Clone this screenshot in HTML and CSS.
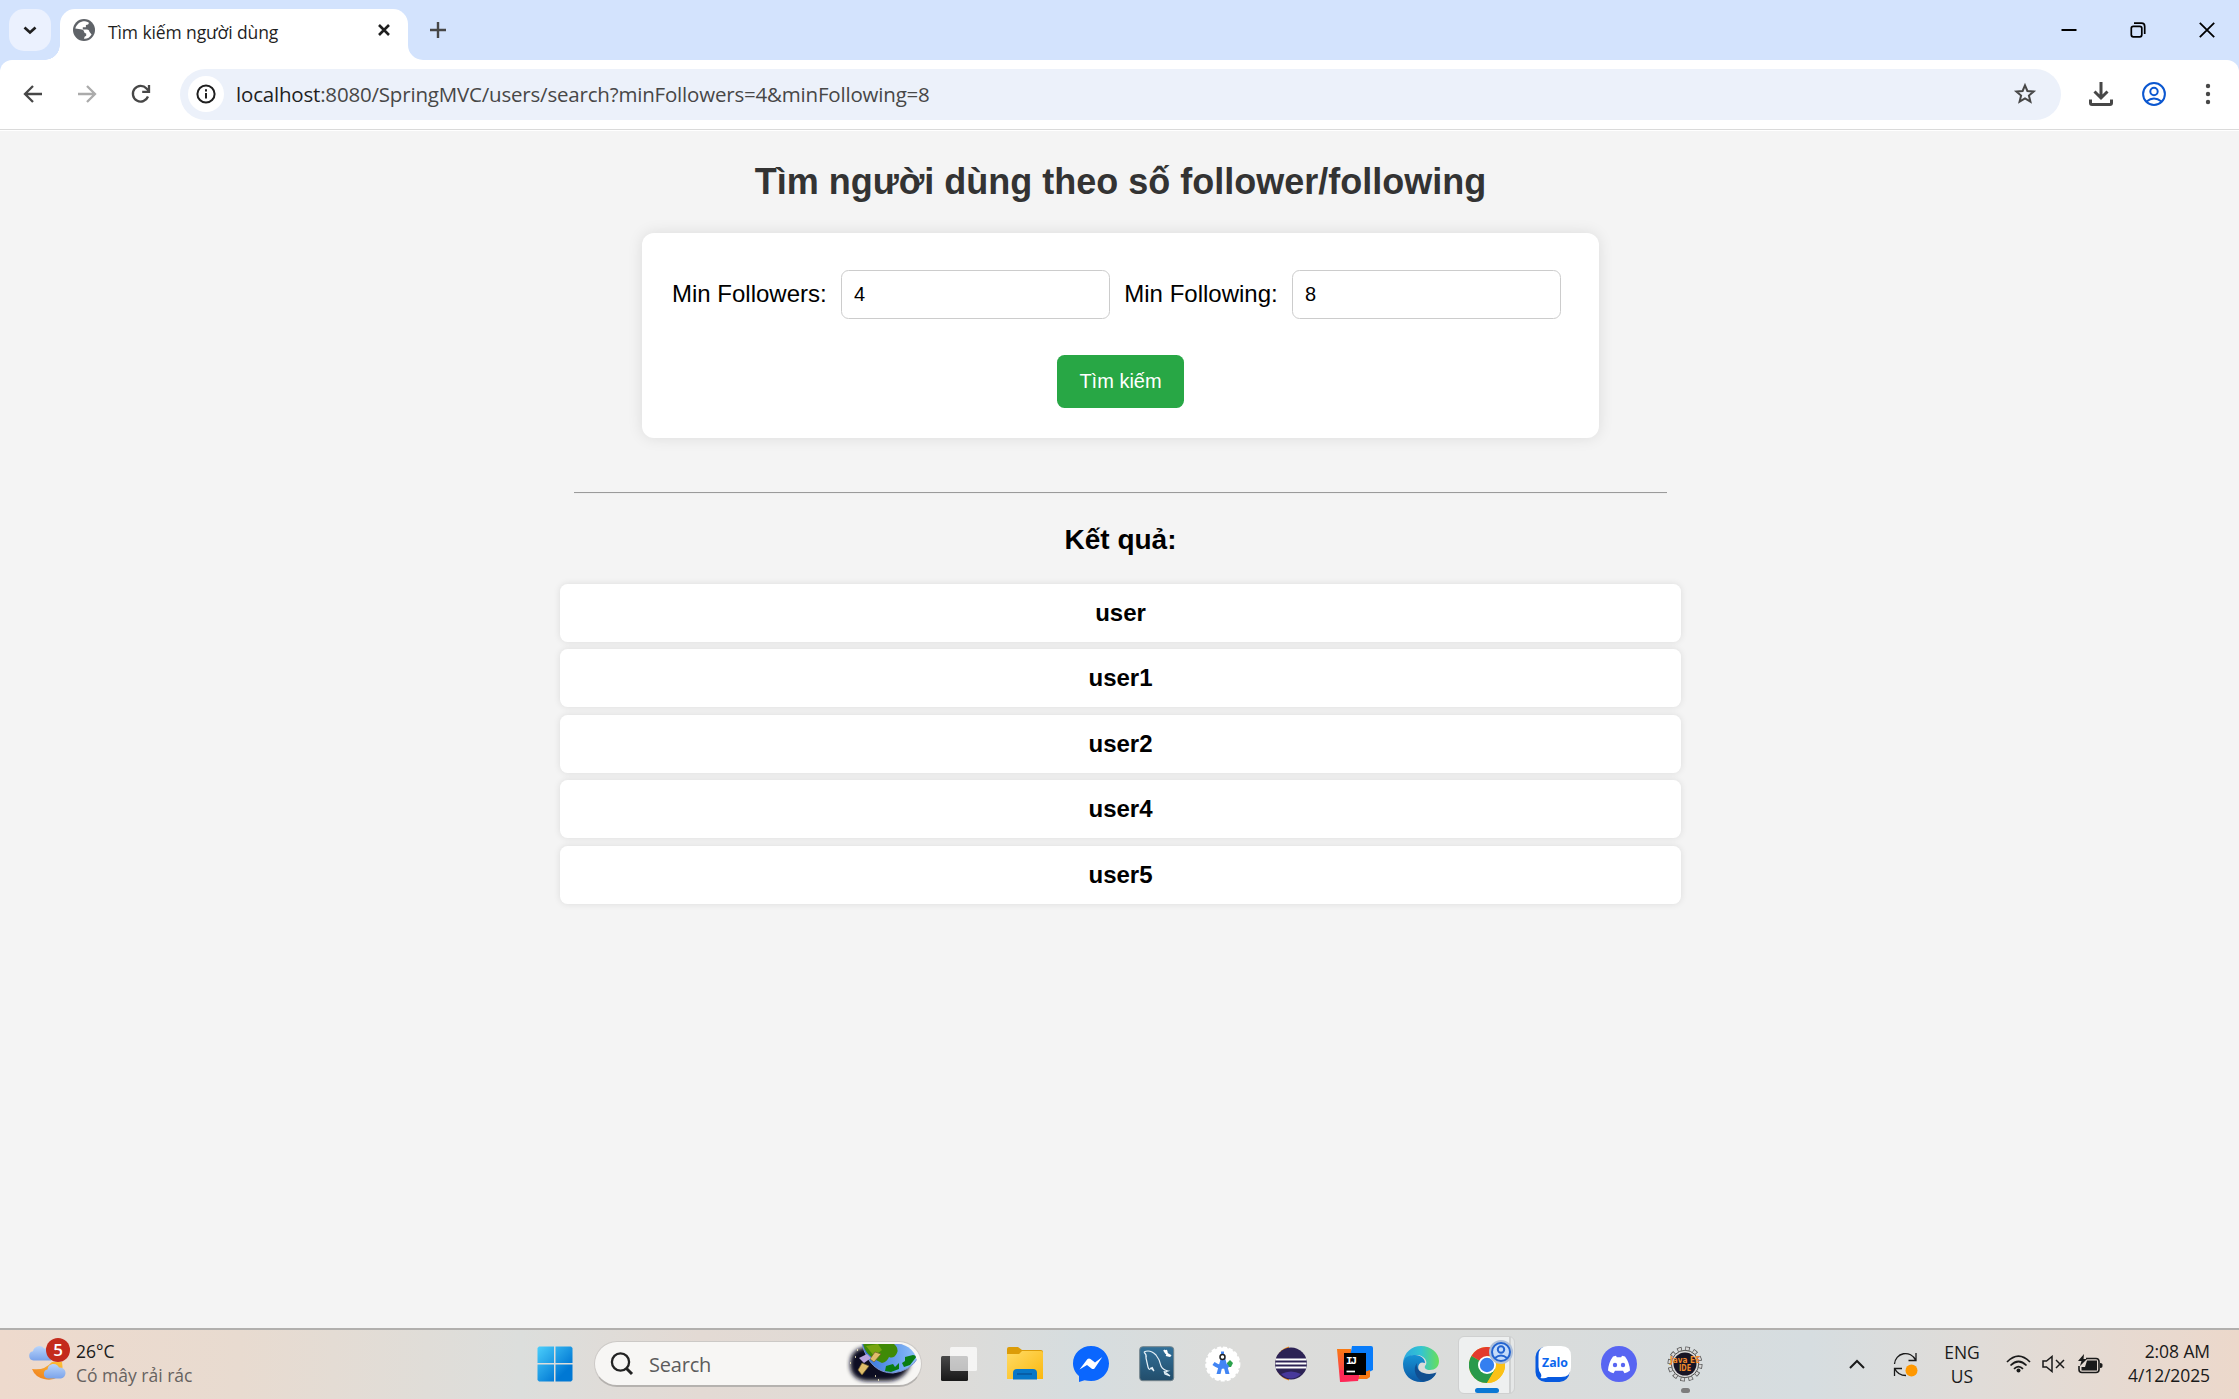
FILE: index.html
```html
<!DOCTYPE html>
<html lang="vi">
<head>
<meta charset="utf-8">
<title>Tìm kiếm người dùng</title>
<link rel="stylesheet" href="styles.css">
</head>
<body>
<header class="tabstrip">
  <div class="tab-search"><svg width="42" height="42" viewBox="0 0 42 42"><path d="M15.5 18.5l5.500 5 5.500-5" fill="none" stroke="#1f1f1f" stroke-width="2.700"/></svg></div>
  <div class="tab">
    <svg class="globe" width="22" height="22" viewBox="0 0 22 22"><circle cx="11" cy="11" r="11" fill="#5f6368"/><path d="M12 2.2C8 2 3.600 4.500 2.300 9.500L7.500 10.300q3.300.3 3.500 2.300t2.200 2v2.200q-2.200.7-2.200 2.900 5 .3 7.600-4.200l-2-2.500q-.7-2.800-3.200-2.400H9.800V8.200h3.100V6q3.400-.4 2.800-2.600-1.700-1-3.700-1.200z" fill="#fff"/><path d="M2.200 10.800l4.800 4.700q1.700.7 1.500 2.900v1Q2.500 17.600 2.200 10.800z" fill="#5f6368"/></svg>
    <span class="tab-title">Tìm kiếm người dùng</span>
    <svg class="tab-close" width="12" height="12" viewBox="0 0 12 12"><path d="M1 1l10 10M11 1L1 11" stroke="#1f1f1f" stroke-width="2.600"/></svg>
  </div>
  <svg class="tab-flare" width="15" height="15"><path d="M0 0A15 15 0 0 0 15 15H0z" fill="#fff"/></svg>
  <svg class="new-tab" width="16" height="16"><path d="M8 0v16M0 8h16" stroke="#474747" stroke-width="2.400"/></svg>
  <div class="window-buttons">
    <svg width="16" height="16"><path d="M.5 8h15" stroke="#000" stroke-width="2"/></svg>
    <svg width="16" height="16" fill="none" stroke="#000" stroke-width="1.700"><rect x="1.300" y="4.300" width="10.500" height="10.500" rx="2"/><path d="M4 1.200h7.500Q14.700 1.200 14.700 4.500V12"/></svg>
    <svg width="16" height="16"><path d="M.8.800l14.400 14.400M15.200.8L.8 15.200" stroke="#000" stroke-width="1.800"/></svg>
  </div>
</header>
<nav class="toolbar">
  <svg width="20" height="20" fill="none" stroke="#474747" stroke-width="2.300"><path d="M19 10H2.500M10 2l-8 8 8 8"/></svg>
  <svg width="20" height="20" fill="none" stroke="#ababab" stroke-width="2.300"><path d="M1 10h16.500M10 2l8 8-8 8"/></svg>
  <svg width="20" height="20" fill="none" stroke="#474747" stroke-width="2.300"><path d="M17 12.500A7.800 7.800 0 1 1 15.500 4.500L18 7.200"/><path d="M18 1v6.800h-6.800"/></svg>
  <div class="omnibox">
    <span class="site-info"><svg width="20" height="20"><circle cx="10" cy="10" r="8.600" fill="none" stroke="#1f1f1f" stroke-width="2"/><path d="M10 9v5.500M10 5.300v2.200" stroke="#1f1f1f" stroke-width="2"/></svg></span>
    <span class="url"><b>localhost</b>:8080/SpringMVC/users/search?minFollowers=4&amp;minFollowing=8</span>
    <svg class="star" width="24" height="24"><path d="M12 3.300l2.400 5.700 6.200.5-4.700 4 1.500 6.100L12 16.300l-5.400 3.300 1.500-6.100-4.700-4L9.600 9z" fill="none" stroke="#474747" stroke-width="2"/></svg>
  </div>
  <div class="actions">
    <svg width="24" height="24" fill="none" stroke="#474747" stroke-width="3"><path d="M12 0v15M5.500 9.500l6.500 6.500 6.500-6.500M1.500 17.500v3.500q0 1.500 1.500 1.500h18q1.500 0 1.500-1.500v-3.500"/></svg>
    <svg width="24" height="24" fill="none" stroke="#0b57d0" stroke-width="2"><circle cx="12" cy="12" r="10.900"/><circle cx="12" cy="9.500" r="3.700"/><path d="M4.500 19.500q7.500-6 15 0"/></svg>
    <svg width="6" height="22" fill="#474747"><circle cx="3" cy="3" r="2.200"/><circle cx="3" cy="11" r="2.200"/><circle cx="3" cy="19" r="2.200"/></svg>
  </div>
</nav>
<main class="page">
  <h2>Tìm người dùng theo số follower/following</h2>
  <form class="search-form">
    <div class="fields">
      <label for="followers">Min Followers:</label>
      <input id="followers" type="text" value="4">
      <label for="following">Min Following:</label>
      <input id="following" type="text" value="8">
    </div>
    <button type="button">Tìm kiếm</button>
  </form>
  <hr>
  <h3>Kết quả:</h3>
  <ul class="results">
    <li>user</li>
    <li>user1</li>
    <li>user2</li>
    <li>user4</li>
    <li>user5</li>
  </ul>
</main>
<footer class="taskbar">
  <div class="weather">
    <div class="weather-icon">
      <svg width="42" height="44" viewBox="0 0 42 44">
        <defs><linearGradient id="cloud" x2="0" y2="1"><stop stop-color="#b9d5fb"/><stop offset="1" stop-color="#7ba3ea"/></linearGradient><linearGradient id="moon" x1="1" y1="0" x2="0" y2="1"><stop stop-color="#fdc23a"/><stop offset="1" stop-color="#ee7a1c"/></linearGradient></defs>
        <path d="M5.500 21.500a4.700 4.700 0 0 1-.5-9.300 6.500 6.500 0 0 1 11.500-2.500 6 6 0 0 1 6.500 11.800z" fill="url(#cloud)"/>
        <path d="M4 30q12 2 20-7h10q2 10-4 15-6 4-14 2-9-2-12-10z" fill="url(#moon)"/>
        <path d="M20 39.500a4.500 4.500 0 0 1-.5-8.900 6 6 0 0 1 11.500-2 5.500 5.500 0 0 1 2 10.900z" fill="url(#cloud)"/>
      </svg>
      <span class="badge">5</span>
    </div>
    <div class="weather-text"><span>26°C</span><span class="muted">Có mây rải rác</span></div>
  </div>
  <div class="apps">
    <svg class="start" width="36" height="36" viewBox="0 0 36 36"><defs><linearGradient id="win" gradientUnits="userSpaceOnUse" x1="0" y1="0" x2="36" y2="36"><stop stop-color="#4cd0fc"/><stop offset=".75" stop-color="#0078d4"/></linearGradient></defs><g fill="url(#win)"><path d="M2 .5h15V17H.5V2z"/><path d="M18.500.5H34L35.500 2v15h-17z"/><path d="M.5 18.500H17v17H2L.5 34z"/><path d="M18.500 18.500h17V34L34 35.500H18.500z"/></g></svg>
    <div class="search-box">
      <svg width="24" height="24"><circle cx="10.500" cy="10" r="8.600" fill="none" stroke="#222" stroke-width="2.300"/><path d="M16.500 16.500l5.500 5.500" stroke="#222" stroke-width="3"/></svg>
      <span>Search</span>
      <svg class="earth" width="72" height="40" viewBox="0 0 72 40">
        <defs><filter id="soft"><feGaussianBlur stdDeviation="2"/></filter><clipPath id="pill"><rect width="71" height="39" rx="19.500"/></clipPath><linearGradient id="sea"><stop stop-color="#2f6fd8"/><stop offset="1" stop-color="#8fc0fb"/></linearGradient></defs>
        <path d="M20 3h30l14 18q-6 16-24 16H20Q4 35 4 20T20 3z" fill="#101022" filter="url(#soft)"/>
        <g clip-path="url(#pill)"><path d="M16 0h56v14Q64 27 47 29 24 29 16 0z" fill="url(#sea)" stroke="#7d93cf"/><path d="M17 0h31q5 4 3 9-3 6-8 4-2 5-7 6l-6-3Q19 10 17 0z" fill="#3f8a06"/><path d="M20 2l12-2 4 6-8 6z" fill="#77a511"/><path d="M40 22l7-2 2 3 4-4v6l-8 3-6-1zM56 19l3-2v-4l8-2 4 1-7 9-6 2z" fill="#0a7d12"/></g>
        <path d="M24 15l5-7 6 2-7 8zM12 26l4-7 7 3-7 9z" fill="#e0be6b" stroke="#735d2b" stroke-width=".7"/><path d="M13 14l8-4 4 4-7 5z" fill="#b9a4dc"/><path d="M4 19h1M11 6h1M29 32h1M32 36h1M9 13h1" stroke="#fff5c5" stroke-width="1.500"/>
      </svg>
    </div>
    <div class="pinned">
      <svg width="36" height="36"><defs><linearGradient id="tv" x2="0" y2="1"><stop stop-color="#484848"/><stop offset="1" stop-color="#181818"/></linearGradient></defs><rect y="10" width="27" height="25" rx="1.500" fill="url(#tv)"/><rect x="9" y="1" width="27" height="24" rx="1.500" fill="#fff" fill-opacity=".7"/></svg>
      <svg width="36" height="36"><defs><linearGradient id="fo" x2="1" y2="1"><stop stop-color="#ffdb65"/><stop offset="1" stop-color="#fbb80f"/></linearGradient></defs><path d="M0 10V3q0-2 2-2h9l4 3h19q2 0 2 2v5z" fill="#dc9c08"/><path d="M0 8h12l3-3h19q2 0 2 2v26H0z" fill="url(#fo)"/><path d="M6 33.500V27q0-4 4-4h16q4 0 4 4v6.500z" fill="#0877c8"/><path d="M10 28h15" stroke="#07569c" stroke-width="1.500"/></svg>
      <svg width="36" height="36"><path d="M18 0C8 0 0 7.500 0 17.300c0 5.200 2.300 9.700 6 12.800V36l5.500-1.700c2 .5 4.200.8 6.500.8 10 0 18-7.800 18-17.600S28 0 18 0z" fill="#0a66fe"/><path d="M6.500 23.500L14.500 13q1.500-1 3 0l4.500 3.500 7.300-5.500-7.800 11.500q-1.500 1-3 0L14 19z" fill="#fff"/></svg>
      <svg width="36" height="36"><defs><linearGradient id="my" x2="0" y2="1"><stop stop-color="#32719a"/><stop offset="1" stop-color="#224d6b"/></linearGradient></defs><rect x=".7" y=".7" width="34" height="34" rx="3" fill="url(#my)" stroke="#73838b"/><path d="M5 6q6-3 12 3 4 5 5 11 2 4 7 5l-3 1 5 4-5-2-1-3M5 6q3 3 2 6l2 9q1 4 3 1l3 3-2-4" fill="none" stroke="#e6f1f8" stroke-width="1.200"/><path d="M25 4l2 3 5 3M27 4l1 3M31 10l-4-1" stroke="#fff" stroke-width="2"/></svg>
      <svg width="36" height="36"><circle cx="17.800" cy="18" r="16.600" fill="#fff" stroke="#fff" stroke-width="2" stroke-dasharray="4 2"/><path d="M22 17l3-3 3 3-2 4h-4z" fill="#2ba24c"/><path d="M17 8l-5.500 20h4l1.500-6h2l1.500 6h4L19 8z" fill="#4285f4"/><path d="M8.500 17.500q8 6 15 2" fill="none" stroke="#4285f4" stroke-width="3.500"/><path d="M17.500 5.500v4" stroke="#4285f4" stroke-width="3"/><circle cx="17.500" cy="11" r="2.500" fill="#fff" stroke="#202124" stroke-width="1.500"/></svg>
      <svg width="36" height="36"><path d="M18 .5A17.500 17.500 0 0 0 18 34.500z" fill="#f7941e"/><circle cx="20" cy="17.500" r="16" fill="#2c2255"/><path d="M10 28q10-5 20 0-10 9-20 0z" fill="#48389b"/><path d="M4.500 13.500h31M4.500 17.500h31M4.500 21.500h31" stroke="#fff" stroke-width="1.800"/></svg>
      <svg width="36" height="36"><defs><linearGradient id="ij" x2="0" y2="1"><stop stop-color="#f97a12"/><stop offset="1" stop-color="#ff2763"/></linearGradient></defs><path d="M0 3h14v32l-11 1z" fill="url(#ij)"/><path d="M15 0h19q2 0 2 2v22l-6 3H10z" fill="#087cfa"/><path d="M25 27l8-3v7l-3 2H20z" fill="#f97a12"/><path d="M3 24l20 3-2 8-18 1z" fill="#fe2857"/><rect x="7" y="7" width="22" height="22" fill="#000"/><text x="9" y="18" class="ij-mark" textLength="11">IJ</text><path d="M9.500 25.500H18" stroke="#fff" stroke-width="1.700"/></svg>
      <svg width="36" height="36"><defs><linearGradient id="e1"><stop stop-color="#2ca7e0"/><stop offset=".5" stop-color="#33c4d2"/><stop offset="1" stop-color="#69df58"/></linearGradient><linearGradient id="e2" x2="0" y2="1"><stop stop-color="#1793d5"/><stop offset="1" stop-color="#0c59a4"/></linearGradient></defs><path d="M0 17C1 6 9 0 18 0c10 0 18 7 18 15 0 6-4 9-9 9-4 0-6-2-5-4 4-4-1-11-8-11C7 9 1 12 0 17z" fill="url(#e1)"/><path d="M0 18C0 11 7 8.500 12 9c6 0 10 4 10 8-7-3-9 6-4 10 5 5 11 3 15 1-4 6-9 8-15 8C8 36 0 29 0 18z" fill="url(#e2)"/><path d="M14 17c-5 6-1 16 6 18.500 6-.5 11-4 13.500-9-10 4-22-1-19.500-9.500z" fill="#114f91"/></svg>
      <div class="chrome-slot">
        <svg width="36" height="36" viewBox="0 0 36 36"><circle cx="18" cy="18" r="18" fill="#fbc116"/><path d="M18 18L2.400 9A18 18 0 0 1 33.600 9z" fill="#e33b2e"/><path d="M33.600 9H18v9z" fill="#e33b2e"/><path d="M2.400 9A18 18 0 0 0 18 36l8-13.500-8-4.500z" fill="#299a4b"/><path d="M18 9h15.600A18 18 0 0 1 18 36l8-13.500z" fill="#fbc116"/><circle cx="18" cy="18" r="9" fill="#fff"/><circle cx="18" cy="18" r="7.200" fill="#347ff0"/></svg>
        <svg class="profile" width="24" height="24" fill="none" stroke="#2364d0" stroke-width="2"><circle cx="12" cy="12" r="12" fill="#aebfd9" stroke="none"/><circle cx="12" cy="12" r="9" fill="#c5dcfa"/><circle cx="12" cy="9.500" r="3.200"/><path d="M6 18q6-5 12 0"/></svg>
      </div>
      <svg width="36" height="36"><rect x=".5" y="1" width="34" height="35" rx="10" fill="#0759df"/><path d="M13 0h13q10 0 10 10v11q0 10-10 10H13q-3 2-7.500 1 1.500-2 .5-4-2.500-3-2.500-7V10Q3.500 0 13 0z" fill="#fff"/><text x="7" y="20.500" class="zalo-mark" textLength="26" lengthAdjust="spacingAndGlyphs">Zalo</text></svg>
      <svg width="36" height="36"><circle cx="18" cy="18" r="18" fill="#5865f2"/><path d="M12 10.500l3-.8.8 1.500h4.400l.8-1.500 3 .8q4.500 6 5 14-2.500 2-5.500 2.700l-1.500-2.400h-8l-1.500 2.400Q9.500 26.500 7 24.500q.5-8 5-14z" fill="#fff"/><circle cx="14" cy="19" r="2.200" fill="#5865f2"/><circle cx="22" cy="19" r="2.200" fill="#5865f2"/></svg>
      <div class="ide-slot">
        <svg width="36" height="36"><circle cx="18" cy="18" r="15.500" fill="none" stroke="#555" stroke-width="4" stroke-dasharray="4.500 3.600"/><circle cx="18" cy="18" r="15.200" fill="none" stroke="#d8d8d8" stroke-width="3" stroke-dasharray="3 4.940" stroke-dashoffset="-.7"/><circle cx="18" cy="18" r="13.700" fill="#d5d5d5" stroke="#555"/><circle cx="18" cy="18" r="11.500" fill="#171425"/><text x="3" y="17" class="ide-mark" textLength="30" lengthAdjust="spacingAndGlyphs">Java EE</text><text x="12" y="24.500" class="ide-mark" textLength="12" lengthAdjust="spacingAndGlyphs">IDE</text></svg>
      </div>
    </div>
  </div>
  <div class="tray">
    <svg class="chevron" width="16" height="10"><path d="M1 9l7-7 7 7" fill="none" stroke="#1a1a1a" stroke-width="2"/></svg>
    <svg class="sync" width="25" height="25" fill="none" stroke="#1a1a1a" stroke-width="1.300"><path d="M1.500 12A11 11 0 0 1 22.500 8M23 1v7.500h-7.500M13 23.500Q5 23.500 2 17M1.500 24v-7.500H9"/><circle cx="18.500" cy="18.500" r="6" fill="#ff9800" stroke="none"/></svg>
    <div class="language"><span>ENG</span><span>US</span></div>
    <svg class="wifi" width="25" height="18" fill="none" stroke="#1a1a1a" stroke-width="1.700"><path d="M1 7Q12.500-4.500 24 7M4.500 10.500q8-8 16 0M8 13.800q4.500-4.500 9 0"/><circle cx="12.500" cy="15.500" r="2" fill="#1a1a1a" stroke="none"/></svg>
    <svg class="speaker" width="23" height="18" fill="none" stroke="#1a1a1a" stroke-width="1.500"><path d="M1 6v6h3.500l5.500 4.500v-15L4.500 6zM14 5l8 8M22 5l-8 8"/></svg>
    <svg class="battery" width="25" height="20"><path d="M8 4.500h10q3 0 3 3v8q0 3-3 3H4q-3 0-3-3V12" fill="none" stroke="#1a1a1a" stroke-width="1.600"/><path d="M9 6.500h10v10H3.500V13H7zM22 9q3 0 2.500 2.500.3 2.500-2.500 2.500z" fill="#1a1a1a"/><path d="M6 0L0 7h3.500L2 12l7-7H5.500z" fill="#1a1a1a"/></svg>
    <div class="clock"><span>2:08 AM</span><span>4/12/2025</span></div>
  </div>
</footer>
</body>
</html>
```
FILE: styles.css
```css
* { box-sizing: border-box; }
body {
  margin: 0;
  width: 2239px;
  height: 1399px;
  overflow: hidden;
  display: flex;
  flex-direction: column;
  background: #d3e3fd;
  font-family: "Open Sans", "Noto Sans", sans-serif;
}
svg { display: block; flex: none; }

.tabstrip { height: 60px; display: flex; padding-left: 9px; }
.tab-search { width: 42px; height: 42px; margin-top: 9px; border-radius: 15px; background: #ebf1fe; }
.tab {
  position: relative;
  width: 348px;
  height: 51px;
  margin: 9px 0 0 9px;
  padding: 0 18px 0 13px;
  display: flex;
  background: #fff;
  border-radius: 15px 15px 0 0;
}
.tab::before {
  content: "";
  position: absolute;
  left: -15px;
  bottom: 0;
  width: 15px;
  height: 15px;
  background: radial-gradient(circle at 0 0, transparent 14.5px, #fff 15px);
}
.globe { margin-top: 10px; }
.tab-title { margin: 9px 0 0 13px; font-size: 17.5px; line-height: 28px; letter-spacing: -.1px; color: #1f1f1f; white-space: nowrap; }
.tab-close { margin: 15px 0 0 auto; }
.tab-flare { align-self: flex-end; }
.new-tab { margin: 22px 0 0 7px; }
.window-buttons { margin: 22px 24px 0 auto; display: flex; gap: 53px; }

.toolbar {
  height: 71px;
  padding: 0 28px 3px 23px;
  display: flex;
  align-items: center;
  gap: 34px;
  background: #fff;
  border-radius: 12px 12px 0 0;
  box-shadow: inset 0 -1px #fff, inset 0 -2px #dadada;
}
.toolbar .omnibox { margin-left: -5px; }
.omnibox {
  flex: 1;
  height: 51px;
  padding: 0 24px 0 8px;
  display: flex;
  align-items: center;
  border-radius: 26px;
  background: #ecf1fa;
}
.site-info { width: 36px; height: 36px; border-radius: 50%; background: #fff; display: grid; place-items: center; }
.url { margin-left: 12px; font-size: 20.5px; line-height: 30px; padding-bottom: 1px; color: #474747; letter-spacing: -.19px; white-space: nowrap; }
.url b { font-weight: 400; color: #1f1f1f; }
.star { margin-left: auto; }
.actions { display: flex; align-items: center; gap: 29px; margin-left: -6px; }
.actions svg:last-child { margin-left: 10px; }

.page { flex: 1; background: #f4f4f4; padding: 30px 0 0 2px; font-family: "Liberation Sans", Arial, sans-serif; color: #000; }
.page h2 { margin: 0 0 30px; text-align: center; font-size: 36px; line-height: 42px; color: #333; }
.search-form {
  width: 957px;
  height: 205px;
  margin: 0 auto;
  padding: 37px 30px 30px;
  display: flex;
  flex-direction: column;
  align-items: center;
  justify-content: space-between;
  border-radius: 12px;
  background: #fff;
  box-shadow: 0 0 15px rgba(0, 0, 0, .1);
}
.fields { align-self: stretch; display: flex; align-items: center; gap: 14.3px; font-size: 24px; white-space: nowrap; }
.fields label { padding-bottom: 2px; }
.fields input {
  width: 269px;
  height: 49px;
  padding: 0 12px;
  border: 1px solid #ccc;
  border-radius: 7.5px;
  font: 20px "Liberation Sans", Arial, sans-serif;
}
.search-form button {
  width: 127px;
  height: 53px;
  padding: 0 0 1px;
  border: 0;
  border-radius: 7.5px;
  background: #28a745;
  color: #fff;
  font: 20px "Liberation Sans", Arial, sans-serif;
}
.page hr { width: 1093px; height: 2px; margin: 54px auto 0; border: 0; border-top: 1px solid #9a9a9a; border-bottom: 1px solid #eee; }
.page h3 { margin: 29px 0 27.7px; text-align: center; font-size: 28px; line-height: 33px; }
.results { list-style: none; width: 1121px; margin: 0 auto; padding: 0; display: flex; flex-direction: column; gap: 7.5px; }
.results li {
  height: 58px;
  line-height: 58px;
  text-align: center;
  font-size: 24px;
  font-weight: 700;
  border-radius: 7.5px;
  background: #fff;
  box-shadow: 0 0 7.5px rgba(0, 0, 0, .1);
}

.taskbar {
  height: 71px;
  border-top: 2px solid #b1afad;
  display: flex;
  align-items: center;
  color: #1a1a1a;
  font-size: 17.5px;
  line-height: 24px;
  background: linear-gradient(90deg, #eedacd 0, #e8dbd0 240px, #dcdedc 520px, #e3dad4 700px, #e0dbd6 900px, #d6dddf 1080px, #dcdcda 1240px, #dadcdb 1500px, #d6dde0 1810px, #e0dcd8 1980px, #ecd8cb 2239px);
}
.weather { width: 537px; padding-left: 28px; display: flex; align-items: center; gap: 6px; }
.weather-icon { margin-bottom: 8px; position: relative; }
.badge {
  position: absolute;
  left: 18px;
  top: -1px;
  width: 24px;
  height: 24px;
  border-radius: 50%;
  background: #c42b1c;
  color: #fff;
  font-size: 17px;
  font-weight: 600;
  line-height: 23px;
  text-align: center;
}
.weather-text, .language, .clock { display: flex; flex-direction: column; padding-bottom: 3px; white-space: nowrap; }
.weather-text .muted { color: #666260; }
.apps { display: flex; align-items: center; margin-bottom: 1px; }
.search-box {
  width: 328px;
  height: 46px;
  margin: 0 19px 0 21px;
  padding: 0 3px 0 15px;
  display: flex;
  align-items: center;
  border: 1px solid #ccc9c6;
  border-bottom: 2px solid #b5b2af;
  border-radius: 23px;
  background: #f7f6f4;
  color: #5c5c5c;
  font-size: 20px;
}
.search-box span { margin-left: 15px; padding-top: 2px; letter-spacing: -.2px; }
.earth { margin-left: auto; }
.pinned { display: flex; align-items: center; gap: 30px; }
.chrome-slot {
  position: relative;
  width: 57px;
  height: 58px;
  margin: 0 -10px -1px -11px;
  padding: 10px 0 0 10px;
  border: 1px solid #cfd0d0;
  border-radius: 6px;
  background: linear-gradient(90deg, #eef0f0 50px, #cfd1d1 50px 52px, #e5e7e7 52px);
}
.chrome-slot::after, .ide-slot::after { content: ""; position: absolute; border-radius: 3px; }
.chrome-slot::after { left: 16px; bottom: 0; width: 24px; height: 5px; background: #0a78d4; }
.profile { position: absolute; left: 30px; top: 3px; }
.ide-slot { position: relative; }
.ide-slot::after { left: 14px; top: 42px; width: 9px; height: 5px; background: #7d7d7d; }
.ij-mark { font: 700 11px "Liberation Mono", monospace; fill: #fff; }
.zalo-mark { font: 700 12px "Open Sans", sans-serif; fill: #0b66ee; }
.ide-mark { font: 700 8px "DejaVu Sans", sans-serif; fill: #f18a2b; }

.tray { margin-left: auto; padding-right: 29px; display: flex; align-items: center; margin-bottom: 1px; }
.chevron { margin-right: 1px; }
.sync { margin-left: 27px; }
.language { margin-left: 25px; width: 38px; align-items: center; padding-bottom: 0; }
.wifi { margin-left: 25px; }
.speaker { margin-left: 11px; }
.battery { margin-left: 13px; }
.clock { width: 84px; margin-left: 23px; align-items: flex-end; }
.clock span { letter-spacing: -.1px; }
```
